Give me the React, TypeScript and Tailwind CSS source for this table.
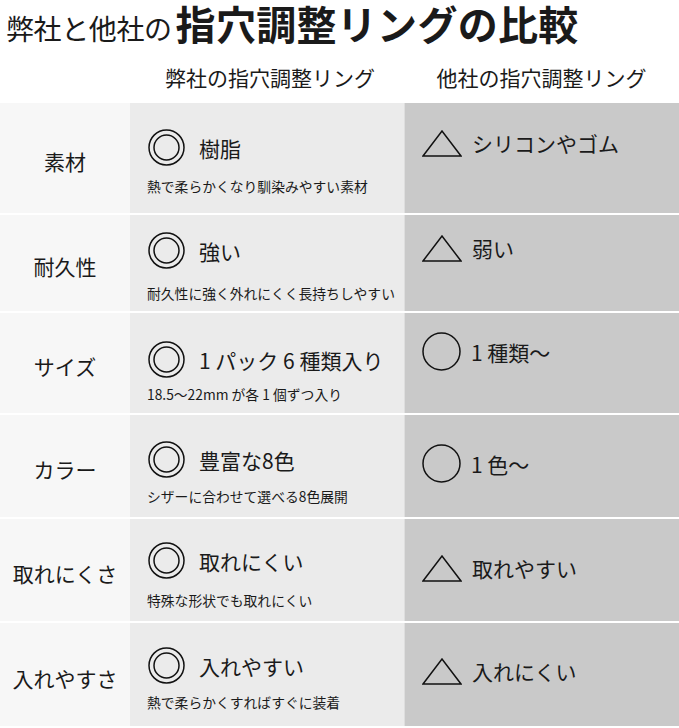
import React from 'react';

type Mark = 'double' | 'circle' | 'triangle';

type Row = {
  label: string;
  h: string;
  mineTop: string;
  subGap: string;
  main: string;
  sub: string;
  mark: Mark;
  other: string;
  otherTop: string;
};

const rows: Row[] = [
  {
    label: '素材',
    h: 'h-[110px]',
    mineTop: 'pt-[26px]',
    subGap: 'mt-[10px]',
    main: '樹脂',
    sub: '熱で柔らかくなり馴染みやすい素材',
    mark: 'triangle',
    other: 'シリコンやゴム',
    otherTop: 'pt-[26px]',
  },
  {
    label: '耐久性',
    h: 'h-[96px]',
    mineTop: 'pt-[17px]',
    subGap: 'mt-[14px]',
    main: '強い',
    sub: '耐久性に強く外れにくく長持ちしやすい',
    mark: 'triangle',
    other: '弱い',
    otherTop: 'pt-[19px]',
  },
  {
    label: 'サイズ',
    h: 'h-[100px]',
    mineTop: 'pt-[28px]',
    subGap: 'mt-[6px]',
    main: '1 パック 6 種類入り',
    sub: '18.5〜22mm が各 1 個ずつ入り',
    mark: 'circle',
    other: '1 種類〜',
    otherTop: 'pt-[19px]',
  },
  {
    label: 'カラー',
    h: 'h-[102px]',
    mineTop: 'pt-[26px]',
    subGap: 'mt-[8px]',
    main: '豊富な8色',
    sub: 'シザーに合わせて選べる8色展開',
    mark: 'circle',
    other: '1 色〜',
    otherTop: 'pt-[29px]',
  },
  {
    label: '取れにくさ',
    h: 'h-[102px]',
    mineTop: 'pt-[23px]',
    subGap: 'mt-[11px]',
    main: '取れにくい',
    sub: '特殊な形状でも取れにくい',
    mark: 'triangle',
    other: '取れやすい',
    otherTop: 'pt-[35px]',
  },
  {
    label: '入れやすさ',
    h: 'h-[103px]',
    mineTop: 'pt-[24px]',
    subGap: 'mt-[8px]',
    main: '入れやすい',
    sub: '熱で柔らかくすればすぐに装着',
    mark: 'triangle',
    other: '入れにくい',
    otherTop: 'pt-[34px]',
  },
];

const DoubleCircle = () => (
  <svg width="37" height="37" viewBox="0 0 37 37" className="shrink-0">
    <circle cx="18.5" cy="18.5" r="17.5" fill="none" stroke="#111" strokeWidth="1.5" />
    <circle cx="18.5" cy="18.5" r="12.5" fill="none" stroke="#111" strokeWidth="1.5" />
  </svg>
);

const Circle = () => (
  <svg width="39" height="39" viewBox="0 0 39 39" className="shrink-0">
    <circle cx="19.5" cy="19.5" r="18.5" fill="none" stroke="#111" strokeWidth="1.5" />
  </svg>
);

const Triangle = () => (
  <svg width="40" height="27" viewBox="0 0 40 27" className="shrink-0">
    <polygon points="1,26 20,1 39,26" fill="none" stroke="#111" strokeWidth="1.5" strokeLinejoin="miter" />
  </svg>
);

const App: React.FC = () => {
  return (
    <div className="w-[679px] h-[728px] bg-white overflow-hidden text-[#1a1a1a] font-['Noto_Sans_CJK_JP','Noto_Sans',sans-serif]">
      {/* Title */}
      <div className="h-[52px] flex items-baseline pl-[6px]">
        <span className="text-[28px] leading-[46px] tracking-[-0.4px]">弊社と他社の</span>
        <span className="text-[40px] leading-[46px] font-bold ml-[4px] tracking-[0.3px]">指穴調整リングの比較</span>
      </div>

      {/* Column headers */}
      <div className="h-[51px] grid grid-cols-[130px_274px_275px] items-center">
        <div />
        <div className="text-center text-[21px] pl-[6px]">弊社の指穴調整リング</div>
        <div className="text-center text-[21px]">他社の指穴調整リング</div>
      </div>

      {/* Table */}
      <div className="flex flex-col gap-[2px]">
        {rows.map((row, index) => (
          <div key={index} className={`grid grid-cols-[130px_274px_275px] ${row.h}`}>
            <div className="bg-[#f7f7f7] flex items-center justify-center pt-[8px] text-[21px]">
              {row.label}
            </div>
            <div className={`bg-[#ebebeb] flex flex-col pl-[17px] ${row.mineTop}`}>
              <div className="flex items-center gap-[14px] pl-[1px]">
                <DoubleCircle />
                <span className="text-[21px] leading-[28px] whitespace-nowrap">{row.main}</span>
              </div>
              <div className={`text-[13.8px] leading-[20px] whitespace-nowrap ${row.subGap}`}>{row.sub}</div>
            </div>
            <div className={`bg-[#c9c9c9] border-l border-[#dedede] pl-[17px] ${row.otherTop}`}>
              <div className="flex items-center gap-[10px]">
                {row.mark === 'triangle' ? <Triangle /> : <Circle />}
                <span className="text-[21px] leading-[28px] whitespace-nowrap">{row.other}</span>
              </div>
            </div>
          </div>
        ))}
      </div>
    </div>
  );
};

export default App;
